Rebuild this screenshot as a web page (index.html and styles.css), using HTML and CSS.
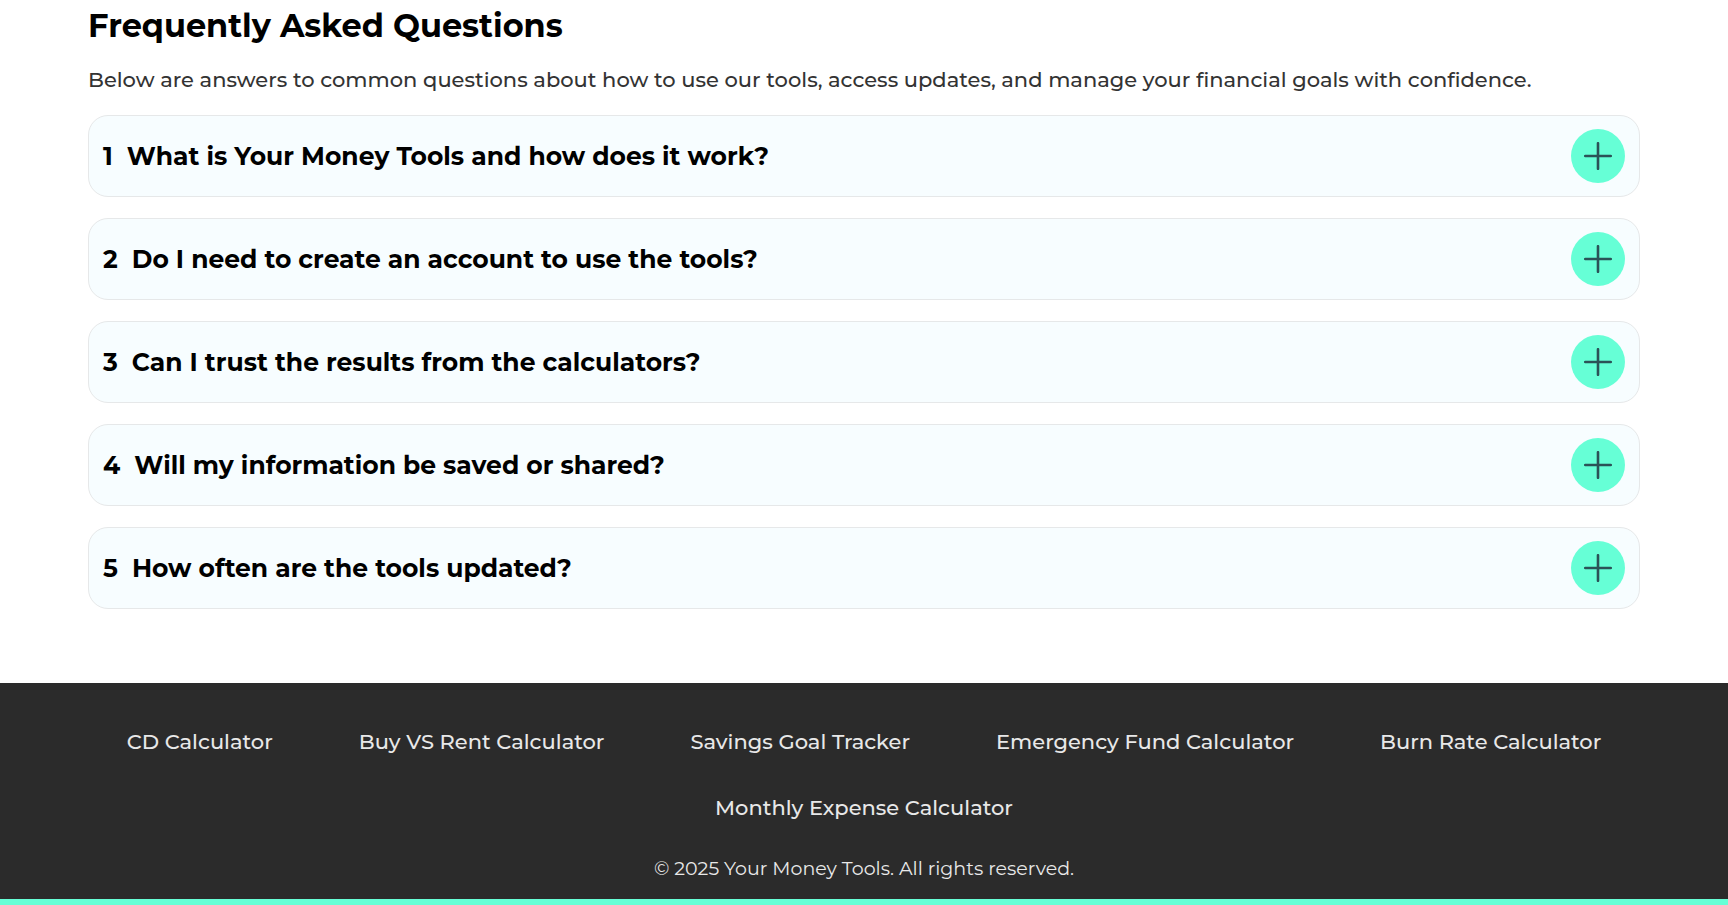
FILE: index.html
```html
<!DOCTYPE html>
<html lang="en">
<head>
<meta charset="utf-8">
<meta name="viewport" content="width=device-width, initial-scale=1">
<title>Your Money Tools</title>
<link rel="stylesheet" href="styles.css">
</head>
<body>
<svg class="sprite" aria-hidden="true">
  <symbol id="plus" viewBox="0 0 28 28"><path d="M14 1.2v25.6M1.2 14h25.6" fill="none" stroke="currentColor" stroke-width="2.6" stroke-linecap="round"/></symbol>
</svg>
<main class="faq">
  <h2 class="faq-title">Frequently Asked Questions</h2>
  <p class="faq-intro">Below are answers to common questions about how to use our tools, access updates, and manage your financial goals with confidence.</p>
  <div class="faq-list">
    <button class="faq-item" type="button" aria-expanded="false"><span class="faq-number">1</span><span class="faq-question">What is Your Money Tools and how does it work?</span><span class="faq-toggle"><svg class="plus"><use href="#plus"/></svg></span></button>
    <button class="faq-item" type="button" aria-expanded="false"><span class="faq-number">2</span><span class="faq-question">Do I need to create an account to use the tools?</span><span class="faq-toggle"><svg class="plus"><use href="#plus"/></svg></span></button>
    <button class="faq-item" type="button" aria-expanded="false"><span class="faq-number">3</span><span class="faq-question">Can I trust the results from the calculators?</span><span class="faq-toggle"><svg class="plus"><use href="#plus"/></svg></span></button>
    <button class="faq-item" type="button" aria-expanded="false"><span class="faq-number">4</span><span class="faq-question">Will my information be saved or shared?</span><span class="faq-toggle"><svg class="plus"><use href="#plus"/></svg></span></button>
    <button class="faq-item" type="button" aria-expanded="false"><span class="faq-number">5</span><span class="faq-question">How often are the tools updated?</span><span class="faq-toggle"><svg class="plus"><use href="#plus"/></svg></span></button>
  </div>
</main>
<footer class="footer">
  <nav class="footer-nav" aria-label="Calculators">
    <a class="footer-link" href="#cd">CD Calculator</a>
    <a class="footer-link" href="#rent">Buy VS Rent Calculator</a>
    <a class="footer-link" href="#savings">Savings Goal Tracker</a>
    <a class="footer-link" href="#emergency">Emergency Fund Calculator</a>
    <a class="footer-link" href="#burn">Burn Rate Calculator</a>
    <a class="footer-link" href="#expense">Monthly Expense Calculator</a>
  </nav>
  <p class="copyright">© 2025 Your Money Tools. All rights reserved.</p>
</footer>
</body>
</html>
```
FILE: styles.css
```css
* {
  box-sizing: border-box;
}

body {
  margin: 0;
  background: #fff;
  color: #000;
  font-family: Montserrat, Inter, sans-serif;
}

.sprite {
  display: none;
}

.faq {
  padding: 4px 88px 74px;
}

.faq-title {
  margin: 0;
  font-size: 32px;
  line-height: 44px;
  font-weight: 700;
}

.faq-intro {
  margin: 16px 0 20px;
  color: #333;
  font-size: 21px;
  line-height: 31px;
  font-weight: 500;
}

.faq-list {
  display: grid;
  gap: 21px;
}

.faq-item {
  display: flex;
  align-items: center;
  gap: 14px;
  width: 100%;
  padding: 13px 14px;
  border: 1px solid #e6e8e9;
  border-radius: 20px;
  background: #f7fdff;
  color: #000;
  font: inherit;
  font-size: 25px;
  line-height: 32px;
  font-weight: 700;
  text-align: left;
  cursor: pointer;
}

.faq-question {
  flex: 1;
}

.faq-toggle {
  display: grid;
  place-items: center;
  width: 54px;
  height: 54px;
  border-radius: 50%;
  background: #66ffd6;
  color: #2b5257;
}

.plus {
  width: 28px;
  height: 28px;
}

.footer {
  padding: 43px 88px 16px;
  border-bottom: 6px solid #66ffd6;
  background: #2b2b2b;
  color: #e8e8e8;
  text-align: center;
}

.footer-nav {
  display: flex;
  flex-wrap: wrap;
  justify-content: center;
  gap: 34px 86px;
}

.footer-link {
  color: inherit;
  font-size: 21px;
  font-weight: 500;
  line-height: 32px;
  text-decoration: none;
}

.copyright {
  margin: 31px 0 0;
  font-size: 19px;
  line-height: 28px;
}
```
